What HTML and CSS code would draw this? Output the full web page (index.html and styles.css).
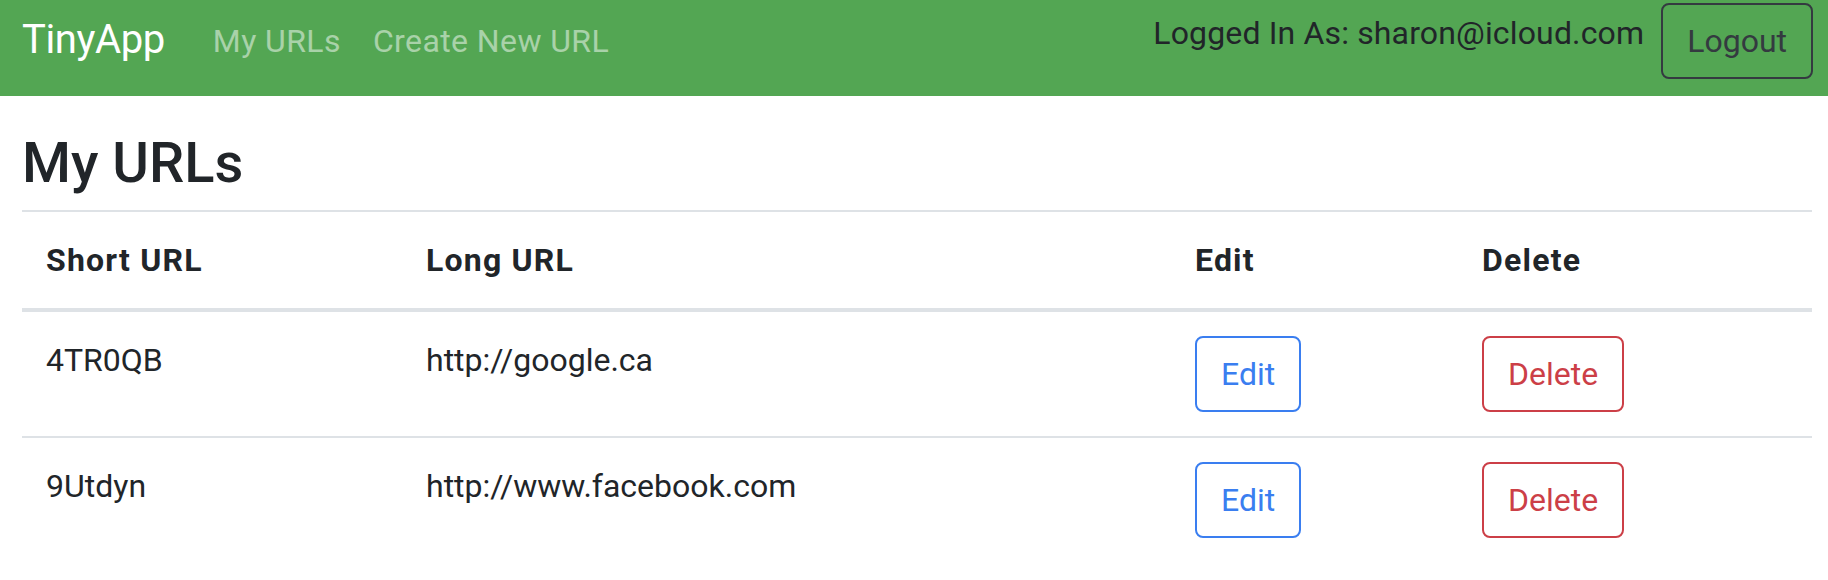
FILE: index.html
```html
<!DOCTYPE html>
<html lang="en">
<head>
<meta charset="utf-8">
<title>TinyApp</title>
<link rel="stylesheet" href="styles.css">
</head>
<body>
<nav class="navbar">
  <a class="brand" href="#">TinyApp</a>
  <div class="nav-links">
    <a class="nav-link" href="#">My URLs</a>
    <a class="nav-link" href="#">Create New URL</a>
  </div>
  <div class="user-area">
    <span class="user-text">Logged In As: sharon@icloud.com</span>
    <form class="logout-form"><button class="btn btn-dark-outline" type="button">Logout</button></form>
  </div>
</nav>
<main class="container">
  <h1 class="page-title">My URLs</h1>
  <table class="url-table">
    <thead>
      <tr>
        <th class="col-short">Short URL</th>
        <th class="col-long">Long URL</th>
        <th class="col-edit">Edit</th>
        <th class="col-delete">Delete</th>
      </tr>
    </thead>
    <tbody>
      <tr>
        <td>4TR0QB</td>
        <td>http://google.ca</td>
        <td><a class="btn btn-primary-outline" href="#">Edit</a></td>
        <td><button class="btn btn-danger-outline" type="button">Delete</button></td>
      </tr>
      <tr>
        <td>9Utdyn</td>
        <td>http://www.facebook.com</td>
        <td><a class="btn btn-primary-outline" href="#">Edit</a></td>
        <td><button class="btn btn-danger-outline" type="button">Delete</button></td>
      </tr>
    </tbody>
  </table>
</main>
</body>
</html>
```
FILE: styles.css
```css
* { box-sizing: border-box; }

body {
  margin: 0;
  font-family: Roboto, "Liberation Sans", sans-serif;
  color: #212529;
  background: #fff;
}

a { text-decoration: none; }

.navbar {
  display: flex;
  align-items: flex-start;
  height: 96px;
  padding: 0 15px 0 22px;
  background: #53a653;
}

.brand {
  margin-top: 10px;
  font-size: 40px;
  line-height: 60px;
  letter-spacing: -0.4px;
  color: #fff;
  margin-right: 32px;
}

.nav-links {
  display: flex;
  margin-top: 17px;
}

.nav-link {
  padding: 0 16px;
  font-size: 32px;
  line-height: 48px;
  letter-spacing: 0.4px;
  color: rgba(255, 255, 255, 0.5);
}

.user-area {
  margin-left: auto;
  display: flex;
  align-items: flex-start;
}

.user-text {
  margin-top: 9px;
  font-size: 32px;
  line-height: 48px;
  letter-spacing: 0.15px;
  color: #212529;
  margin-right: 17px;
}

.logout-form {
  margin: 3px 0 0 0;
}

.btn {
  display: inline-block;
  vertical-align: top;
  padding: 12px 24px;
  font-family: inherit;
  font-size: 32px;
  line-height: 48px;
  border: 2px solid transparent;
  border-radius: 8px;
  background: transparent;
  cursor: pointer;
}

.btn-dark-outline {
  color: #343a40;
  border-color: #343a40;
}

.btn-primary-outline {
  color: #3a7ef0;
  border-color: #3a7ef0;
}

.btn-danger-outline {
  color: #cc3f47;
  border-color: #cc3f47;
}

.container {
  padding: 0 16px 0 22px;
}

.page-title {
  margin: 34px 0 13px 0;
  font-size: 56px;
  font-weight: 500;
  line-height: 67px;
}

.url-table {
  width: 100%;
  table-layout: fixed;
  border-collapse: separate;
  border-spacing: 0;
  font-size: 32px;
  line-height: 48px;
}

.url-table th,
.url-table td {
  padding: 24px;
  text-align: left;
  vertical-align: top;
}

.url-table th {
  font-weight: 700;
  letter-spacing: 1.2px;
  border-top: 2px solid #dee2e6;
  border-bottom: 4px solid #dee2e6;
}

.url-table tbody tr + tr td {
  border-top: 2px solid #dee2e6;
}

.col-short { width: 380px; }
.col-long { width: 769px; }
.col-edit { width: 287px; }
.col-delete { width: auto; }
```
